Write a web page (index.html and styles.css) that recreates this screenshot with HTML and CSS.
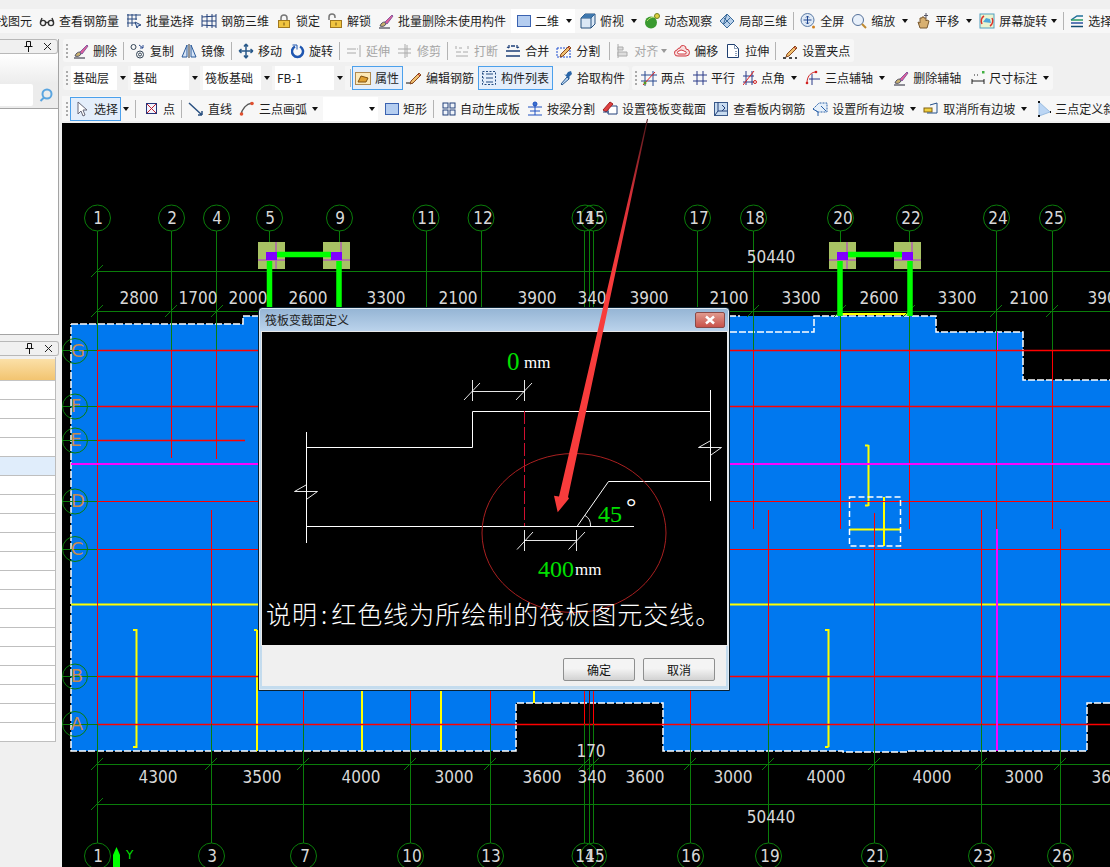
FILE: index.html
```html
<!DOCTYPE html>
<html lang="zh">
<head>
<meta charset="utf-8">
<title>筏板变截面定义</title>
<link rel="stylesheet" href="styles.css">
</head>
<body>
<svg class="defs" width="0" height="0">
  <defs>
    <symbol id="brush" viewBox="0 0 16 16"><path d="M1 15h11" stroke="#223" fill="none"/><path d="M2 13c1-3 3-4 5-4l1 2c-1 2-3 3-6 2z" fill="#c8b070" stroke="#556"/><path d="M7 9l7-7 1 1-6 8z" fill="#e0609a" stroke="#8a5aa0"/></symbol>
    <symbol id="pencil" viewBox="0 0 16 16"><path d="M5 11l8-8 2 2-8 8-3 1z" fill="#f0c070" stroke="#8a4a20"/><path d="M12 4l2 2" stroke="#c03030"/></symbol>
    <symbol id="mag" viewBox="0 0 16 16"><circle cx="7" cy="7" r="5.5" fill="#e8f0fa" stroke="#55719a"/><path d="M11 11l4 4" stroke="#c08a30" stroke-width="2"/></symbol>
    <linearGradient id="shaft" x1="0" y1="0" x2="0" y2="1"><stop offset="0" stop-color="#50181c"/><stop offset=".2" stop-color="#d83038"/><stop offset=".4" stop-color="#f83c3c"/><stop offset="1" stop-color="#f83c3c"/></linearGradient>
  </defs>
</svg>

<div class="row1">
  <span class="t first"><span>找图元</span></span>
  <span class="t"><svg class="ic" viewBox="0 0 16 16" fill="none" stroke="#333" stroke-width="1.4"><circle cx="4" cy="10" r="2.6"/><circle cx="12" cy="10" r="2.6"/><path d="M6.5 9.5h3M1.5 9 3 5M14.5 9 13 5"/></svg><span>查看钢筋量</span></span>
  <span class="t"><svg class="ic" viewBox="0 0 16 16" fill="none" stroke="#2a4a80"><path d="M1 2h14M1 6h10M1 10h8M2 1v13M6 1v12M10 1v6"/><path d="M9 9l6 3-3 1-1 2z" fill="#c8d8f0"/></svg><span>批量选择</span></span>
  <span class="t"><svg class="ic" viewBox="0 0 16 16" fill="none" stroke="#23407a"><path d="M1 4l14-1M1 12l14 1M1 2v12M15 1v14M6 1v14M11 1v14M1 8h14"/></svg><span>钢筋三维</span></span>
  <span class="t"><svg class="ic" viewBox="0 0 16 16"><path d="M5 8V5a3 3 0 0 1 6 0v3" fill="none" stroke="#777" stroke-width="1.5"/><rect x="2.5" y="7.5" width="11" height="7" fill="#f0c440" stroke="#a07820"/><path d="M8 9.5v3" stroke="#705010"/></svg><span>锁定</span></span>
  <span class="t"><svg class="ic" viewBox="0 0 16 16"><path d="M2 7V4a3 3 0 0 1 6 0v1" fill="none" stroke="#777" stroke-width="1.5"/><rect x="3.5" y="7.5" width="11" height="7" fill="#f0c440" stroke="#a07820"/><path d="M9 9.5v3" stroke="#705010"/></svg><span>解锁</span></span>
  <span class="t"><svg class="ic"><use href="#brush"/></svg><span>批量删除未使用构件</span></span>
  <span class="box mn2"><span class="t"><svg class="ic n" viewBox="0 0 14 16"><rect x=".5" y="2.5" width="13" height="11" fill="#b4cdf0" stroke="#3a62b0"/></svg><span>二维</span></span><i class="caret ml7"></i></span>
  <span class="t mn2"><svg class="ic" viewBox="0 0 16 16"><path d="M1 5l4-4h10v10l-4 4H1z" fill="#dbe8f6" stroke="#24507f"/><path d="M1 5h10v10M11 5l4-4" fill="none" stroke="#24507f"/><path d="M1 5l4-4h10l-4 4z" fill="#3f78ae"/></svg><span>俯视</span></span><i class="caret"></i>
  <span class="t"><svg class="ic" viewBox="0 0 16 16"><circle cx="7" cy="9.500" r="6" fill="#3a9a30"/><path d="M3 8c2-3 5-4 8-4" stroke="#bde070" fill="none"/><circle cx="13" cy="3" r="2.500" fill="#e0d040" stroke="#708020"/></svg><span>动态观察</span></span>
  <span class="t"><svg class="ic" viewBox="0 0 16 16" fill="#b8d0ea" stroke="#3a6a9a"><path d="M1 8l7-7 7 7-7 7z"/><path d="M4.500 4.500l7 7M8 1l-3.500 10M11.500 4.500l-7 7" fill="none"/></svg><span>局部三维</span></span>
  <i class="sep"></i>
  <span class="t"><svg class="ic" viewBox="0 0 16 16"><circle cx="7.500" cy="7" r="6.500" fill="#dfe9f5" stroke="#5a7aa5"/><path d="M7.500 3v8M3.500 7h8M7.500 3l-1.500 1.500M7.500 3 9 4.500M7.500 11 6 9.500M7.500 11 9 9.500" stroke="#1f4590" fill="none"/><circle cx="13.500" cy="14" r="1.500" fill="#d08020"/></svg><span>全屏</span></span>
  <span class="t"><svg class="ic"><use href="#mag"/></svg><span>缩放</span></span><i class="caret"></i>
  <span class="t"><svg class="ic" viewBox="0 0 16 16"><path d="M3 9l2 6h7l2-7-2-1-1 1V5H9V4H7v1H5v5z" fill="#d8b070" stroke="#7a5a30"/><path d="M11 0v5M9 2.500h4" stroke="#556"/></svg><span>平移</span></span><i class="caret"></i>
  <span class="t"><svg class="ic" viewBox="0 0 16 16"><rect x="1" y="1" width="14" height="14" fill="#eaf4d0" stroke="#50a0c0"/><path d="M4 9l3-4 4 1 1 4z" fill="#50a8d8"/><path d="M3 11a6 6 0 0 1 2-8M13 5a6 6 0 0 1-2 8" stroke="#e03028" stroke-width="1.500" fill="none"/></svg><span>屏幕旋转</span></span><i class="caret mn3"></i>
  <i class="sep"></i>
  <span class="t"><svg class="ic n" viewBox="0 0 14 16" stroke-width="1.500" fill="none"><path d="M1 7l6-4h6" stroke="#20709a"/><path d="M1 7h12" stroke="#2a9a60"/><path d="M1 10h12" stroke="#2a50a0"/><path d="M1 13.500h12" stroke="#104a70"/></svg><span>选择</span></span>
</div>

<div class="work">
  <aside class="side">
    <section class="pane1">
      <header class="pane-head">
        <svg class="pin" viewBox="0 0 9 11" fill="none" stroke="#111"><path d="M2.500.5h4v5h-4zM.5 5.500h8M4.500 6v5"/></svg>
        <svg class="close" viewBox="0 0 9 9" fill="none" stroke="#222"><path d="M1 1l7 7M8 1 1 8"/></svg>
      </header>
      <div class="search">
        <div class="input"></div>
        <svg class="seek" viewBox="0 0 14 14" fill="none" stroke="#5aa5e0" stroke-width="2"><circle cx="8" cy="6" r="4.500"/><path d="M5 9.500 1.500 13"/></svg>
      </div>
      <div class="list"></div>
    </section>
    <section class="pane2">
      <header class="pane-head">
        <svg class="pin" viewBox="0 0 9 11" fill="none" stroke="#111"><path d="M2.500.5h4v5h-4zM.5 5.500h8M4.500 6v5"/></svg>
        <svg class="close" viewBox="0 0 9 9" fill="none" stroke="#222"><path d="M1 1l7 7M8 1 1 8"/></svg>
      </header>
      <div class="table">
        <div class="thead"></div>
        <div class="tr"></div><div class="tr"></div><div class="tr"></div><div class="tr"></div>
        <div class="tr picked"></div>
        <div class="tr"></div><div class="tr"></div><div class="tr"></div><div class="tr"></div><div class="tr"></div>
        <div class="tr"></div><div class="tr"></div><div class="tr"></div><div class="tr"></div><div class="tr"></div>
        <div class="tr"></div><div class="tr"></div><div class="tr"></div><div class="tr"></div>
      </div>
    </section>
  </aside>

  <main class="right">
    <div class="row2">
      <div class="band b2">
        <i class="grip"></i>
        <span class="t"><svg class="ic"><use href="#brush"/></svg><span>删除</span></span>
        <i class="sep"></i>
        <span class="t"><svg class="ic" viewBox="0 0 16 16" fill="none" stroke="#345"><circle cx="3.500" cy="4" r="2.500"/><circle cx="10" cy="11.500" r="3.500"/><circle cx="10" cy="11.500" r="1.500"/><path d="M9 2l4 3M13 2v3h-3" stroke="#2a4a90"/></svg><span>复制</span></span>
        <span class="t"><svg class="ic" viewBox="0 0 16 16" fill="#d6e4f6" stroke="#2a5a9a"><path d="M6 2v12H1zM10 2v12h5z"/><path d="M8 1v14" stroke="#333"/></svg><span>镜像</span></span>
        <i class="sep"></i>
        <span class="t"><svg class="ic" viewBox="0 0 16 16" fill="none" stroke="#2a5a8a" stroke-width="1.500"><path d="M8 1v14M1 8h14M8 1 6 3.500M8 1l2 2.500M8 15l-2-2.500M8 15l2-2.500M1 8l2.500-2M1 8l2.500 2M15 8l-2.500-2M15 8l-2.500 2"/></svg><span>移动</span></span>
        <span class="t ml2"><svg class="ic n" viewBox="0 0 14 16" fill="none"><path d="M4 3.500a5.500 5.500 0 1 0 5 0" stroke="#1f56b0" stroke-width="2.500"/><path d="M1.500 2H6v4.500" stroke="#1f56b0"/></svg><span>旋转</span></span>
        <i class="sep"></i>
        <span class="t off"><svg class="ic" viewBox="0 0 16 16" fill="none" stroke="#aaa"><path d="M1 6h9M1 10h9M11 6h1M14 2v12"/></svg><span>延伸</span></span>
        <span class="t off"><svg class="ic" viewBox="0 0 16 16" fill="none" stroke="#aaa"><path d="M1 6h13M1 10h13M8 1v14M10 2v12"/></svg><span>修剪</span></span>
        <i class="sep"></i>
        <span class="t off"><svg class="ic" viewBox="0 0 16 16" fill="none" stroke="#aaa"><path d="M2 3v3M14 3v3M2 9h5M9 9h5M2 13h12M5 5h3"/></svg><span>打断</span></span>
        <span class="t"><svg class="ic" viewBox="0 0 16 16" fill="none" stroke="#1d3f78" stroke-width="1.300"><path d="M1 8h14M1 13h14M4 2v3M12 2v3M4 5l-2-1M12 5l2-1M6 3h4"/></svg><span>合并</span></span>
        <span class="t"><svg class="ic" viewBox="0 0 16 16"><path d="M1 5h11M1 14h14M1 5v9M14 7v7" stroke="#1f4fd0" stroke-dasharray="2 1" fill="none"/><use href="#pencil"/></svg><span>分割</span></span>
        <i class="sep ml2"></i>
        <span class="t off"><svg class="ic n" viewBox="0 0 14 16" fill="none" stroke="#aaa"><path d="M2 1v14"/><path d="M2 4h5v3H2zM2 9h9v4H2z" fill="#ddd"/></svg><span>对齐</span></span><i class="caret pale mn4"></i>
        <span class="t"><svg class="ic" viewBox="0 0 16 16" fill="#f8dede" stroke="#d03840"><path d="M4 13a3 3 0 0 1-1-6 3 3 0 0 1 3-2 3 3 0 0 1 6 1 3.500 3.500 0 0 1 0 7z"/><path d="M5 11a1.500 1.500 0 0 1 0-3l2-1 2 .5 2 1a1 1 0 0 1 0 2.500z" fill="#fff"/></svg><span>偏移</span></span>
        <span class="t"><svg class="ic" viewBox="0 0 16 16" fill="#fff" stroke="#1f3f70"><path d="M2.500 1.500h7l4 4v9h-11z"/><path d="M9.500 1.500v4h4M11 8v5" fill="none" stroke-dasharray="1 1"/></svg><span>拉伸</span></span>
        <i class="sep"></i>
        <span class="t"><svg class="ic" viewBox="0 0 16 16"><use href="#pencil"/><path d="M1 15h3M7 15h3M13 15h2" stroke="#111" stroke-width="1.500"/></svg><span>设置夹点</span></span>
      </div>
    </div>

    <div class="row3">
      <div class="band b3">
        <i class="grip g3"></i>
        <span class="sel w57"><span>基础层</span><b><i class="caret"></i></b></span>
        <span class="sel w69"><span>基础</span><b><i class="caret"></i></b></span>
        <span class="sel w69"><span>筏板基础</span><b><i class="caret"></i></b></span>
        <span class="sel w70"><span>FB-1</span><b><i class="caret"></i></b></span>
        <i class="sep s3"></i>
        <span class="t on"><svg class="ic" viewBox="0 0 16 16"><rect x=".5" y="2.500" width="15" height="12" fill="#fde9b8" stroke="#b08a50"/><path d="M3 12l3-6 7 2-2 4z" fill="#e0a030" stroke="#805010"/></svg><span>属性</span></span>
        <span class="t"><svg class="ic" viewBox="0 0 16 16"><path d="M0 13h7" stroke="#111"/><use href="#pencil"/></svg><span>编辑钢筋</span></span>
        <span class="t on ml1"><svg class="ic" viewBox="0 0 16 16" fill="none" stroke="#234a80"><rect x="1.500" y="1.500" width="13" height="13" stroke-dasharray="2 1.500"/><path d="M5 4h7M5 8h7M5 12h7M2 4h1M2 8h1M2 12h1"/></svg><span>构件列表</span></span>
        <span class="t ml3"><svg class="ic n" viewBox="0 0 14 16"><path d="M2 14l6-7 2 2-7 6z" fill="#bcd8f4" stroke="#2a5a90"/><path d="M7 5l2-3 3-1 1 3-3 3 1 1-1 1-5-5z" fill="#2a66a8"/></svg><span>拾取构件</span></span>
      </div>
      <div class="band b3b">
        <i class="grip g4"></i>
        <span class="t"><svg class="ic" viewBox="0 0 16 16" fill="none"><path d="M4 1v15M12 1v15M0 5h16M0 11h16" stroke="#2a4a90"/><path d="M2 15 14 2" stroke="#e02020"/><circle cx="4" cy="13" r="1.500" fill="#5a9a20"/></svg><span>两点</span></span>
        <span class="t"><svg class="ic n" viewBox="0 0 14 16" fill="none" stroke="#2a3a88"><path d="M4 1v14M10 1v14M0 5h14M0 11h14"/></svg><span>平行</span></span>
        <span class="t"><svg class="ic n" viewBox="0 0 14 16" fill="none"><path d="M3 1v14M9 1v14M0 6h11M0 12h11" stroke="#2a3a88"/><path d="M0 15 11 1" stroke="#e02020"/><circle cx="12" cy="12" r="1.500" stroke="#d02020"/></svg><span>点角</span></span><i class="caret mn2"></i>
        <span class="t"><svg class="ic" viewBox="0 0 16 16" fill="none"><path d="M7 4v11M4 9h11" stroke="#2a3a88"/><path d="M2 13C2 7 5 3 10 2" stroke="#d02020"/><circle cx="2" cy="13" r="1.300" fill="#d02020"/><circle cx="11" cy="2" r="1.300" fill="#d02020"/></svg><span>三点辅轴</span></span><i class="caret mn2"></i>
        <span class="t"><svg class="ic"><use href="#brush"/></svg><span>删除辅轴</span></span>
        <span class="t ml2"><svg class="ic n" viewBox="0 0 14 16" fill="none" stroke="#222"><path d="M1 11h12M1 9v5M13 9v5M3 5h1M6 5h1"/><rect x="11" y="1" width="2.500" height="2.500" fill="#40b040" stroke="none"/></svg><span>尺寸标注</span></span><i class="caret mn2"></i>
      </div>
    </div>

    <div class="row4">
      <i class="grip g5"></i>
      <span class="t on btn4"><svg class="ic n" viewBox="0 0 14 16"><path d="M2 1v12l3-3 2 5 2-1-2-5h4z" fill="#fff" stroke="#667"/></svg><span>选择</span></span><i class="caret mn5"></i>
      <i class="sep"></i>
      <span class="t ml3"><svg class="ic n" viewBox="0 0 14 16"><rect x="1.500" y="2.500" width="10" height="10" fill="#f3f3fb" stroke="#26357a"/><path d="M2 3l9 9M11 3l-9 9" stroke="#c02030"/></svg><span>点</span></span>
      <i class="sep"></i>
      <span class="t"><svg class="ic" viewBox="0 0 16 16" fill="none" stroke="#2a5080" stroke-width="1.500"><path d="M1 2l13 12M14 14v-4M14 14h-4"/></svg><span>直线</span></span>
      <span class="t"><svg class="ic" viewBox="0 0 16 16" fill="none"><path d="M2 14C3 8 7 3 13 2" stroke="#555" stroke-width="1.500"/><circle cx="2.500" cy="13" r="1.800" fill="#e05030"/><circle cx="13" cy="2.500" r="1.800" fill="#e05030"/></svg><span>三点画弧</span></span><i class="caret mn2"></i>
      <span class="blank mn2"><i class="caret"></i></span>
      <span class="t"><svg class="ic n" viewBox="0 0 14 16"><rect x=".5" y="2.500" width="13" height="11" fill="#b4cdf0" stroke="#3a62b0"/></svg><span>矩形</span></span>
      <i class="sep"></i>
      <span class="t ml2"><svg class="ic n" viewBox="0 0 14 16" fill="#eef3fa" stroke="#23407a"><rect x="1" y="2" width="5" height="5"/><rect x="8" y="2" width="5" height="5"/><rect x="1" y="9" width="5" height="5"/><rect x="8" y="9" width="5" height="5"/></svg><span>自动生成板</span></span>
      <span class="t"><svg class="ic" viewBox="0 0 16 16" fill="none" stroke="#1f50c0"><path d="M1 6h14M3 10h10M1 14h14M8 2v12"/><circle cx="8" cy="3" r="2" fill="#3a70d0"/></svg><span>按梁分割</span></span>
      <span class="t"><svg class="ic" viewBox="0 0 16 16"><path d="M6 5h9v8H6z" fill="#fff" stroke="#23407a"/><path d="M1 9l7-8 3 2-7 8z" fill="#e04040" stroke="#a02020"/><path d="M1 11h6" stroke="#23407a"/></svg><span>设置筏板变截面</span></span>
      <span class="t"><svg class="ic" viewBox="0 0 16 16"><rect x="1.500" y="1.500" width="13" height="13" fill="#c8dcf0" stroke="#3a5a8a"/><path d="M5 1v9h9M5 10l-3 4M9 4l3 3-3 3" stroke="#23407a" fill="none"/></svg><span>查看板内钢筋</span></span>
      <span class="t"><svg class="ic" viewBox="0 0 16 16"><path d="M1 8l6-6h8v9H6z" fill="#e6f0fa" stroke="#2a60a8" stroke-dasharray="2 1"/><path d="M1 8l5 3v4M9 5l5 5" stroke="#2a60a8" fill="none"/></svg><span>设置所有边坡</span></span><i class="caret mn1"></i>
      <span class="t"><svg class="ic" viewBox="0 0 16 16"><rect x="1" y="7" width="8" height="4" fill="#f0d040" stroke="#806010"/><path d="M7 4l7-2v10H4" fill="none" stroke="#23508a"/></svg><span>取消所有边坡</span></span><i class="caret mn1"></i>
      <span class="t ml3"><svg class="ic n" viewBox="0 0 14 16"><path d="M2 1v14l11-4z" fill="#bcd6f4" stroke="#9abce0"/><path d="M1 1h2M1 15h2M13 11h1" stroke="#111" stroke-width="2"/></svg><span>三点定义斜</span></span>
    </div>

    <div class="canvas">
      <svg class="plan" viewBox="62 123 1048 744" width="1048" height="744">
        <path class="slab" d="M71 324H243V316H814V332H814V316H936V332H1023V380H1110V703H1087V751H907V752H843V751H663V703H516V751H71Z"/>
        <path class="border" d="M71 324H243V316H740M730 332H814V316H936V332H1023V380H1110M1110 703H1087V751H907V752H843V751H663V703H516V751H71V324"/>

        <path class="yl" d="M71 604.500H1110M840 314H912M136.500 629V748M133 630h3.500M133 747h3.500M257 630V751M254 630h3M362 690V751M441 690V751M534 691V703M828.500 629V747M825 630h3.500M825 747h3.500M868.500 445V506M865 445.500h3.500M865 505.500h3.500M849 529.500H901M884 497V546"/>
        <path class="red" d="M97 350.500H1110M97 406.500H1110M97 440.500H245M97 676.500H1110M97 724.500H1110"/>
        <path class="red thin" d="M97 501.500H1110M97 549.500H1110M97.500 350V724M171.500 350V458M216.500 350V459M211.500 510V724M303.500 510V724M410.500 690V724M490.500 690V724M584.500 690V724M593.500 690V724M690.500 690V724M753.500 350V529M768.500 510V724M840.500 350V529M874.500 513V724M909.500 350V529M981.500 510V724M996.500 350V529M1052.500 350V529M1060.500 529V724"/>
        <path class="dark" d="M589.500 690V724"/>
        <path class="mg" d="M71 464H1110M997 529V751M997 332V350"/>
        <rect class="dash" x="849.500" y="497" width="51" height="49"/>

        <path class="axis" d="M97.500 231V350M171.500 231V350M216.500 231V350M269.500 231V350M339.500 231V350M426.500 231V350M481.500 231V350M584.500 231V350M589.500 231V350M593.500 231V350M697.500 231V350M753.500 231V350M840.500 231V350M909.500 231V350M996.500 231V350M1052.500 231V350
          M97.500 724V843M211.500 724V843M303.500 724V843M410.500 724V843M490.500 724V843M584.500 724V843M589.500 724V843M593.500 724V843M690.500 724V843M768.500 724V843M874.500 724V843M981.500 724V843M1060.500 724V843
          M97 271.500H1110M97 311.500H1110M97 764.500H1110M97 804.500H1110
          M62 350.500H97M62 406.500H97M62 440.500H97M62 501.500H97M62 549.500H97M62 676.500H97M62 724.500H97
          M91 277l12-12M91 317l12-12M165 317l12-12M211 317l12-12M747 317l12-12M834 317l12-12M903 317l12-12M990 317l12-12M1046 317l12-12
          M91 770l12-12M205 770l12-12M297 770l12-12M404 770l12-12M484 770l12-12M578 770l12-12M587 770l12-12M684 770l12-12M762 770l12-12M868 770l12-12M975 770l12-12M1054 770l12-12M91 810l12-12"/>

        <g class="bub">
          <circle cx="97.500" cy="218" r="13"/><circle cx="171.500" cy="218" r="13"/><circle cx="216.500" cy="218" r="13"/><circle cx="269.500" cy="218" r="13"/><circle cx="339.500" cy="218" r="13"/><circle cx="426" cy="218" r="13"/><circle cx="481" cy="218" r="13"/><circle cx="585" cy="218" r="13"/><circle cx="593.500" cy="218" r="13"/><circle cx="697.500" cy="218" r="13"/><circle cx="753.500" cy="218" r="13"/><circle cx="840.500" cy="218" r="13"/><circle cx="909.500" cy="218" r="13"/><circle cx="996.500" cy="218" r="13"/><circle cx="1052.500" cy="218" r="13"/>
          <circle cx="97.500" cy="856" r="13"/><circle cx="211.500" cy="856" r="13"/><circle cx="303.500" cy="856" r="13"/><circle cx="410.500" cy="856" r="13"/><circle cx="490.500" cy="856" r="13"/><circle cx="585" cy="856" r="13"/><circle cx="593.500" cy="856" r="13"/><circle cx="690.500" cy="856" r="13"/><circle cx="768.500" cy="856" r="13"/><circle cx="874.500" cy="856" r="13"/><circle cx="981.500" cy="856" r="13"/><circle cx="1060.500" cy="856" r="13"/>
          <circle cx="75" cy="351" r="12.500"/><circle cx="75" cy="406.500" r="12.500"/><circle cx="75" cy="440.500" r="12.500"/><circle cx="75" cy="501.500" r="12.500"/><circle cx="75" cy="549" r="12.500"/><circle cx="75" cy="676.500" r="12.500"/><circle cx="75" cy="724" r="12.500"/>
        </g>
        <g class="num">
          <text x="98" y="224">1</text><text x="172" y="224">2</text><text x="217" y="224">4</text><text x="270" y="224">5</text><text x="340" y="224">9</text><text x="427" y="224">11</text><text x="483" y="224">12</text><text x="585" y="224">14</text><text x="595" y="224">15</text><text x="699" y="224">17</text><text x="755" y="224">18</text><text x="843" y="224">20</text><text x="911" y="224">22</text><text x="998" y="224">24</text><text x="1054" y="224">25</text>
          <text x="98" y="862">1</text><text x="212" y="862">3</text><text x="305" y="862">7</text><text x="412" y="862">10</text><text x="491" y="862">13</text><text x="585" y="862">14</text><text x="595" y="862">15</text><text x="691" y="862">16</text><text x="770" y="862">19</text><text x="876" y="862">21</text><text x="983" y="862">23</text><text x="1062" y="862">26</text>
          <text x="139" y="304">2800</text><text x="198" y="304">1700</text><text x="248" y="304">2000</text><text x="308" y="304">2600</text><text x="386" y="304">3300</text><text x="458" y="304">2100</text><text x="537" y="304">3900</text><text x="592" y="304">340</text><text x="649" y="304">3900</text><text x="729" y="304">2100</text><text x="801" y="304">3300</text><text x="879" y="304">2600</text><text x="957" y="304">3300</text><text x="1029" y="304">2100</text><text x="1107" y="304">3900</text>
          <text x="771" y="263">50440</text><text x="771" y="823">50440</text><text x="591" y="757">170</text>
          <text x="158" y="783">4300</text><text x="262" y="783">3500</text><text x="361" y="783">4000</text><text x="454" y="783">3000</text><text x="542" y="783">3600</text><text x="592" y="783">340</text><text x="645" y="783">3600</text><text x="733" y="783">3000</text><text x="826" y="783">4000</text><text x="932" y="783">4000</text><text x="1024" y="783">3000</text><text x="1111" y="783">3600</text>
        </g>
        <g class="ltr">
          <text x="78" y="357">G</text><text x="76" y="412">F</text><text x="76" y="446">E</text><text x="78" y="507">D</text><text x="77" y="555">C</text><text x="77" y="682">B</text><text x="77" y="730">A</text>
        </g>

        <g class="col">
          <rect class="pad" x="258" y="242" width="27" height="27"/><rect class="pad" x="323" y="242" width="27" height="27"/><rect class="pad" x="829" y="242" width="27" height="27"/><rect class="pad" x="894" y="242" width="27" height="27"/>
          <path class="cross" d="M258 260H285M276 242V269M323 260H350M341 242V269M829 260H856M847 242V269M894 260H921M912 242V269"/>
          <path class="beam" d="M277 254.500H331M269.500 261V316M339 261V316M848 254.500H902M840 261V316M910 261V316"/>
          <rect class="core" x="266" y="252" width="11" height="8"/><rect class="core" x="331" y="252" width="11" height="8"/><rect class="core" x="837" y="252" width="11" height="8"/><rect class="core" x="902" y="252" width="11" height="8"/>
        </g>

        <path class="ybase" d="M113 867V855L116.500 847L120 855V867Z"/>
        <text class="yaxis" x="126" y="859">Y</text>
      </svg>

      <div class="dialog">
        <div class="title"><span>筏板变截面定义</span><span class="x"><svg viewBox="0 0 12 10"><path d="M2 1.500l8 7M10 1.500l-8 7" stroke="#fff" stroke-width="2.500"/></svg></span></div>
        <svg class="sketch" viewBox="262 333 465 313" width="465" height="313">
          <path class="ln" d="M306.500 448.500H472.500V412.500H710.500M306.500 433V544M710.500 391V502M306.500 527.500H634M577 527.500 608.500 482.500H710.500"/>
          <path class="ln thin" d="M472.500 392.500H524.500M472.500 381V402M524.500 381V402M464 401l16-17M516 401l16-17M524.500 541.500H576.500M524.500 531V552M576.500 531V552M517 550.500l16-17.500M568.500 550.500 585 533M585 516.500Q591 520 590.500 527M294.500 492.500H317.500M294.500 492.500 306 486M317.500 492.500 307 500M698.500 448.500H721.500M698.500 448.500 710 442M721.500 448.500 711 456"/>
          <path class="rd" d="M524.500 412V527"/>
          <ellipse class="ring" cx="574" cy="534" rx="92" ry="79.500"/>
          <text class="gr big" x="507" y="371">0</text>
          <text class="wh" x="524" y="369">mm</text>
          <text class="gr" x="598" y="523">45</text>
          <text class="deg" x="626" y="516">°</text>
          <text class="gr" x="538" y="578">400</text>
          <text class="wh" x="575" y="576">mm</text>
          <text class="note" x="266" y="625">说明<tspan dx="3">:</tspan><tspan dx="3">红色线为所绘制的筏板图元交线。</tspan></text>
        </svg>
        <div class="foot"><button class="btn">确定</button><button class="btn">取消</button></div>
      </div>
    </div>
  </main>
</div>

<svg class="arrow" viewBox="0 0 1110 867" width="1110" height="867"><path fill="url(#shaft)" d="M648 119 568 497 569 498.500 557.700 512.300 554 495.700 559 496.500 647 119Z"/></svg>
</body>
</html>
```

FILE: styles.css
```css
* { box-sizing: border-box; }
html, body { margin: 0; height: 867px; overflow: hidden; }
body {
  position: relative;
  width: 1110px;
  background: #f0f0f0;
  font: 12px/16px "Noto Sans CJK SC", "Liberation Sans", sans-serif;
  color: #1e1e1e;
}
i { font-style: normal; display: block; flex: none; }
.defs { position: absolute; }

/* toolbars */
.row1 {
  display: flex; align-items: center; gap: 7px;
  height: 24px; margin: 9px 0 3px;
  background: #f7f7f7; overflow: hidden;
}
.t { display: flex; align-items: center; gap: 4px; flex: none; white-space: nowrap; }
.first { margin-left: -4px; }
.ic { width: 16px; height: 16px; flex: none; display: block; }
.ic.n { width: 14px; }
.off { color: #a6a6a6; }
.caret { width: 0; height: 0; border: 3px solid transparent; border-top: 4px solid #111; border-bottom: 0; }
.caret.pale { border-top-color: #999; }
.sep { width: 1px; height: 18px; background: #b4b4b4; margin: 0 -1px; }
.s3 { margin-left: 2px; margin-right: -2px; }
.ml1 { margin-left: 1px; } .ml2 { margin-left: 2px; } .ml3 { margin-left: 3px; } .ml7 { margin-left: 7px; }
.mn1 { margin-left: -1px; } .mn2 { margin-left: -2px; } .mn3 { margin-left: -3px; } .mn4 { margin-left: -4px; } .mn5 { margin-left: -5px; }
.box {
  display: flex; align-items: center; flex: none;
  width: 64px; height: 24px; padding-left: 6px; background: #fff;
}

.work { display: flex; height: 831px; }

.right { width: 1048px; display: flex; flex-direction: column; }
.row2 { height: 23px; margin-left: 1px; margin-top: 3px; display: flex; }
.row3 { height: 24px; margin-left: 1px; margin-top: 4px; display: flex; gap: 3px; }
.row4 {
  display: flex; align-items: center; gap: 7px;
  height: 25px; margin-top: 6px; padding-left: 4px;
  background: #f7f7f7; overflow: hidden;
}
.band { display: flex; align-items: center; background: #f7f7f7; border-radius: 3px; }
.b2 { gap: 7px; padding: 0 4px 0 3px; }
.b3 { gap: 3px; padding: 0 4px 0 3px; background: #f5f5f5; }
.b3b { gap: 8px; padding: 0 4px 0 3px; background: #f7f7f7; }
.grip { width: 2px; height: 14px; margin-right: -2px;
  background: repeating-linear-gradient(#aaa 0 2px, transparent 2px 4px); }
.g3 { margin-right: 0; }
.g4 { margin-right: -4px; }
.g5 { margin-right: -5px; }

.sel { display: flex; align-items: stretch; justify-content: space-between; height: 24px; background: #fff; padding-left: 2px; flex: none; line-height: 24px; }
.sel b { width: 11px; background: #f0f0f0; display: flex; align-items: center; justify-content: center; }
.w57 { width: 57px; } .w69 { width: 69px; } .w70 { width: 70px; }
.on { height: 24px; padding: 0 3px 0 2px; border: 1px solid #4ba0ec; background: #e4eefb; }
.btn4 { padding: 0 2px 0 5px; height: 24px; }
.blank { width: 55px; height: 24px; background: #fff; display: flex; align-items: center; justify-content: flex-end; padding-right: 3px; flex: none; }

/* side panels */
.side { width: 62px; flex: none; padding-top: 3px; display: flex; flex-direction: column; background: #f0f0f0; }
.pane1 { height: 296px; margin-right: 3px; display: flex; flex-direction: column; background: #fff; border-right: 1px solid #a4a4a4; border-bottom: 1px solid #a4a4a4; }
.pane-head {
  height: 15px; flex: none; display: flex; align-items: center; justify-content: flex-end;
  gap: 10px; padding-right: 5px; background: #f0f0f0;
  border: 1px solid #b8b8b8; border-left: 0; border-radius: 0 3px 3px 0;
}
.pin { width: 9px; height: 11px; }
.close { width: 9px; height: 9px; }
.search {
  height: 54px; flex: none; padding: 30px 0 2px; display: flex; align-items: center;
  background: linear-gradient(#fff, #ececec 55%);
}
.input { width: 33px; height: 22px; background: #fff; border-radius: 0 2px 2px 0; }
.seek { width: 14px; height: 14px; margin-left: 6px; }
.list { flex: 1; background: #fff; border-top: 1px solid #a4a4a4; }
.pane2 { margin-top: 6px; margin-right: 3px; }
.table { width: 56px; margin-top: 1px; border-right: 1px solid #bcbcbc; padding-top: 2px; }
.thead { height: 22px; background: linear-gradient(#fbe0a8, #f2c470); border-bottom: 1px solid #c4c4c4; }
.tr { height: 19px; background: #fff; border-bottom: 1px solid #bfbfbf; }
.picked { background: #e0edfb; }

/* plan canvas */
.canvas { position: relative; height: 744px; background: #000; margin-top: 2px; flex: none; }
.plan { display: block; }
.slab { fill: #0078ef; }
.border { fill: none; stroke: #fff; stroke-width: 1.5; stroke-dasharray: 7 2; }
.yl { fill: none; stroke: #ffff00; stroke-width: 2; }
.red { fill: none; stroke: #ff0000; stroke-width: 1.500; }
.red.thin { stroke-width: 1; }
.dark { fill: none; stroke: #7a0a0a; }
.mg { fill: none; stroke: #ff00ff; stroke-width: 2; }
.dash { fill: none; stroke: #fff; stroke-width: 1.500; stroke-dasharray: 6 3; }
.axis { fill: none; stroke: #0a7d0a; stroke-width: 1; }
.bub circle { fill: none; stroke: #0a7d0a; stroke-width: 1; }
.num text { font: 17px "DejaVu Sans Condensed", "DejaVu Sans", sans-serif; fill: #d8d8d8; text-anchor: middle; }
.ltr text { font: 18px "DejaVu Sans", sans-serif; fill: #c88a4e; text-anchor: middle; }
.pad { fill: #a8c264; }
.cross { fill: none; stroke: #b060b0; stroke-width: 1.500; }
.beam { fill: none; stroke: #00ff00; stroke-width: 5.500; }
.core { fill: #8000ff; }
.ybase { fill: #00ff00; }
.yaxis { font: 12px "DejaVu Sans", sans-serif; fill: #00e000; }

/* dialog */
.dialog {
  position: absolute; left: 196px; top: 184px; width: 472px; height: 384px;
  display: flex; flex-direction: column; padding: 0 3px 4px;
  background: linear-gradient(#94b4d4, #bcd4ec 24px, #c4dcee);
  border: 1px solid #0a2030; border-radius: 4px 4px 0 0;
  box-shadow: inset 0 0 0 1px #dfe9f2;
}
.title { height: 24px; flex: none; display: flex; align-items: center; justify-content: space-between; padding: 0 1px 0 3px; color: #222; }
.x { width: 30px; height: 16px; display: flex; align-items: center; justify-content: center; border: 1px solid #8a4a48; border-radius: 2px; background: linear-gradient(#e09a8e, #c8524a); }
.x svg { width: 12px; height: 10px; }
.sketch { display: block; flex: none; background: #000; outline: 1px solid #e8e8e8; }
.foot { flex: 1; display: flex; justify-content: flex-end; align-items: flex-end; gap: 8px; padding: 0 11px 5px 0; background: #f0f0f0; }
.btn {
  width: 72px; height: 23px; padding: 0; font: inherit; color: #111;
  background: linear-gradient(#f4f4f4 45%, #d2d2d2); border: 1px solid #8e8f8f; border-radius: 2px;
}
.ln { fill: none; stroke: #fff; stroke-width: 1; }
.ln.thin { stroke-width: .9; }
.rd { fill: none; stroke: #d01030; stroke-dasharray: 13 3; }
.ring { fill: none; stroke: #a82020; stroke-width: 1; }
.gr { font: 24px "Liberation Serif", serif; fill: #00e000; }
.big { font-size: 25px; }
.wh { font: 17px "Liberation Serif", serif; fill: #fff; }
.deg { font: 26px "Liberation Serif", serif; fill: #fff; }
.note { font: 300 25px "Noto Sans CJK SC", sans-serif; fill: #fff; letter-spacing: 1px; }

.arrow { position: absolute; left: 0; top: 0; pointer-events: none; }
```
